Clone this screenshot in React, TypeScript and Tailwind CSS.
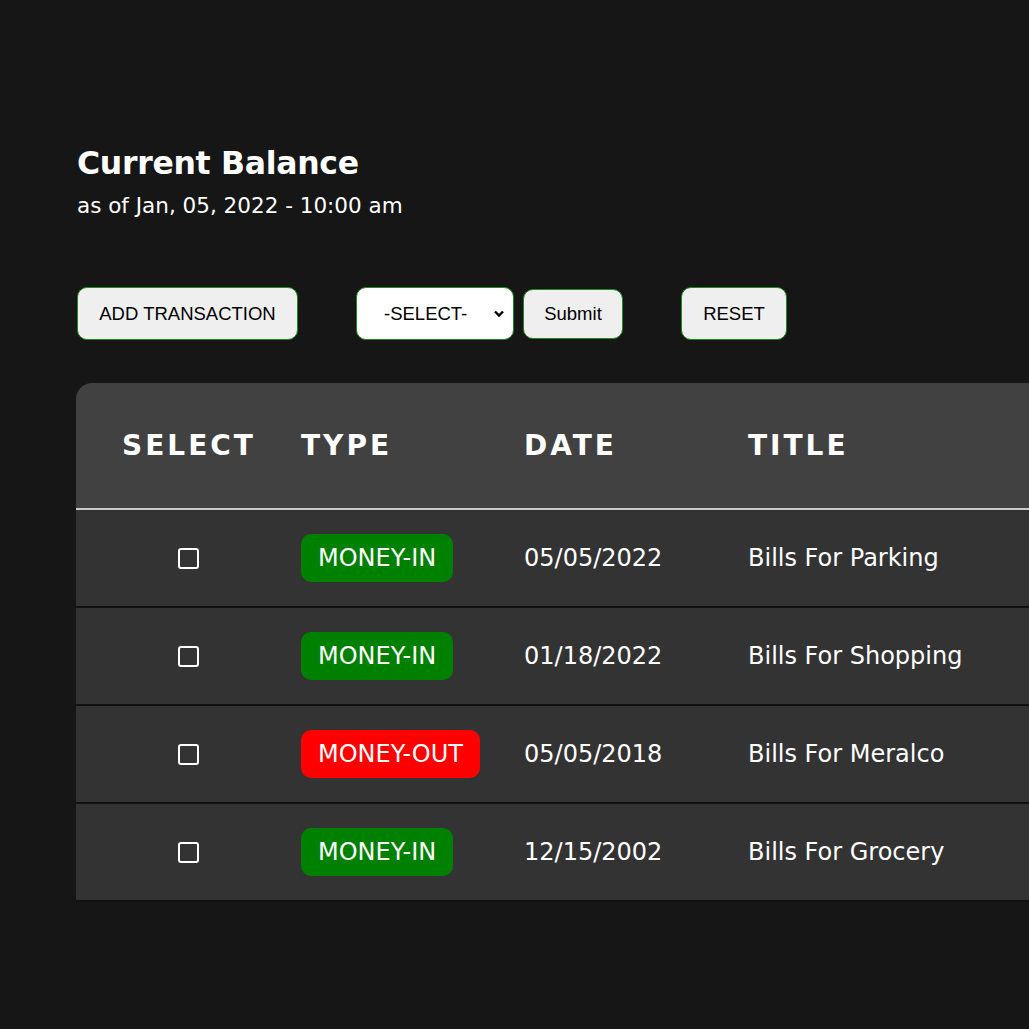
import React, { useState } from 'react';

type Txn = { id: number; type: 'MONEY-IN' | 'MONEY-OUT'; date: string; title: string };

const ROWS: Txn[] = [
  { id: 1, type: 'MONEY-IN', date: '05/05/2022', title: 'Bills For Parking' },
  { id: 2, type: 'MONEY-IN', date: '01/18/2022', title: 'Bills For Shopping' },
  { id: 3, type: 'MONEY-OUT', date: '05/05/2018', title: 'Bills For Meralco' },
  { id: 4, type: 'MONEY-IN', date: '12/15/2002', title: 'Bills For Grocery' },
];

const App: React.FC = () => {
  const [checked, setChecked] = useState<number[]>([]);

  const toggle = (id: number) =>
    setChecked(prev => (prev.includes(id) ? prev.filter(x => x !== id) : [...prev, id]));

  return (
    <div className="min-h-screen w-full overflow-hidden bg-[#161616] text-white font-['DejaVu_Sans',sans-serif]">
      <div className="pl-[77px] pt-[144px]">
        <h1 className="text-[31.5px] font-bold leading-[38px] tracking-[-0.3px]">Current Balance</h1>
        <p className="text-[21.5px] leading-[28px] mt-[10px]">as of Jan, 05, 2022 - 10:00 am</p>

        <div className="flex items-center mt-[67px] font-['Liberation_Sans',Arial,sans-serif] text-[18.5px] text-black">
          <button className="h-[53px] w-[221px] bg-[#efefef] border border-[#1c8a1c] rounded-[10px]">
            ADD TRANSACTION
          </button>
          <div className="relative ml-[58px] h-[53px] w-[158px] bg-white border border-[#1c8a1c] rounded-[10px] flex items-center">
            <span className="pl-[27px]">-SELECT-</span>
            <svg className="absolute right-[8px] top-[21px]" width="12" height="10" viewBox="0 0 12 10">
              <path d="M2 2.5 L6 6.5 L10 2.5" fill="none" stroke="#000" strokeWidth="2.4" />
            </svg>
          </div>
          <button className="ml-[9px] h-[50px] w-[100px] bg-[#efefef] border border-[#1c8a1c] rounded-[10px]">
            Submit
          </button>
          <button className="ml-[58px] h-[53px] w-[106px] bg-[#efefef] border border-[#1c8a1c] rounded-[10px]">
            RESET
          </button>
        </div>
      </div>

      <div className="ml-[76px] mt-[43px] w-[1100px] rounded-tl-[16px] overflow-hidden">
        <div className="flex items-center h-[127px] bg-[#414141] pl-[23px] border-b-2 border-[#c9c9c9] text-[28px] font-bold tracking-[3px]">
          <div className="w-[179px] shrink-0 px-[23px]">SELECT</div>
          <div className="w-[223px] shrink-0 px-[23px]">TYPE</div>
          <div className="w-[224px] shrink-0 px-[23px]">DATE</div>
          <div className="px-[23px]">TITLE</div>
        </div>
        {ROWS.map(r => (
          <div key={r.id} className="flex items-center h-[98px] bg-[#333333] pl-[23px] border-b-2 border-[#111111] text-[24px] whitespace-nowrap">
            <div className="w-[179px] shrink-0 px-[23px] flex justify-center">
              <button
                onClick={() => toggle(r.id)}
                className={`w-[21px] h-[21px] rounded-[3px] border-2 border-white ${checked.includes(r.id) ? 'bg-white' : ''}`}
              />
            </div>
            <div className="w-[223px] shrink-0 px-[23px]">
              <span
                className={`inline-flex items-center h-[48px] px-[17px] rounded-[10px] text-white whitespace-nowrap ${
                  r.type === 'MONEY-IN' ? 'bg-[#008000]' : 'bg-[#ff0000]'
                }`}
              >
                {r.type}
              </span>
            </div>
            <div className="w-[224px] shrink-0 px-[23px]">{r.date}</div>
            <div className="px-[23px]">{r.title}</div>
          </div>
        ))}
      </div>
    </div>
  );
};

export default App;
